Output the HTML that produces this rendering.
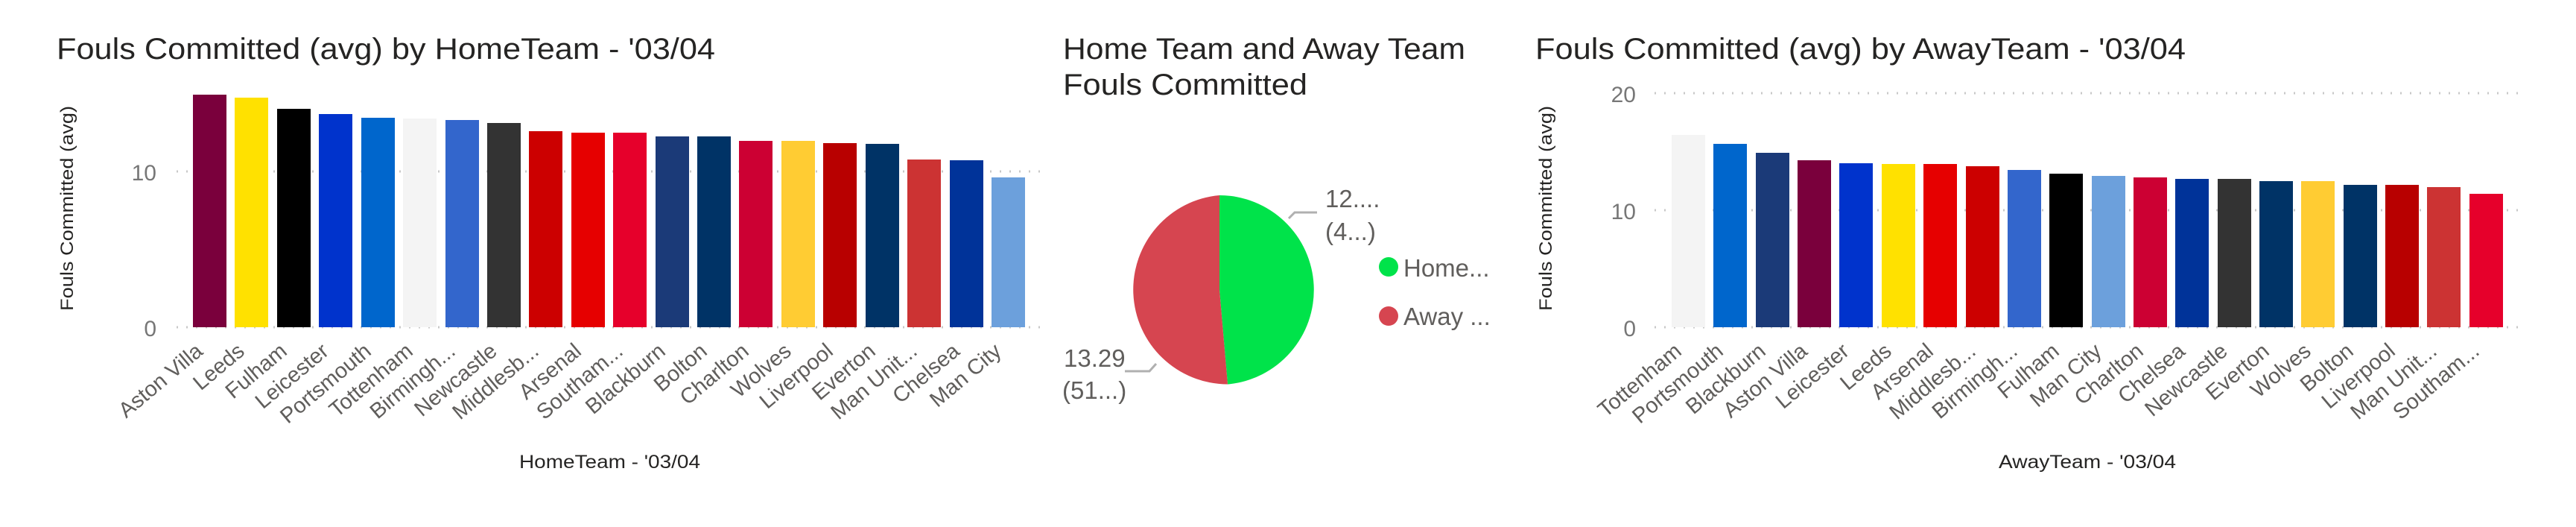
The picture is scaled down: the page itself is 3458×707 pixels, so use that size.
<!DOCTYPE html>
<html><head><meta charset="utf-8"><style>
html,body{margin:0;padding:0;background:#fff;}
svg{display:block;}
text{font-family:"Liberation Sans",sans-serif;}
</style></head><body>
<svg width="3458" height="707" viewBox="0 0 3458 707" xmlns="http://www.w3.org/2000/svg">
<!-- LEFT CHART -->
<text x="76" y="79" font-size="40" fill="#252423" textLength="884" lengthAdjust="spacingAndGlyphs">Fouls Committed (avg) by HomeTeam - '03/04</text>
<text transform="translate(98,417) rotate(-90)" font-size="24" fill="#252423" textLength="275" lengthAdjust="spacingAndGlyphs">Fouls Committed (avg)</text>
<line x1="237" y1="230" x2="1397" y2="230" stroke="#c8c8c8" stroke-width="3" stroke-dasharray="2,11"/>
<line x1="237" y1="439" x2="1397" y2="439" stroke="#c8c8c8" stroke-width="3" stroke-dasharray="2,11"/>
<text x="210" y="242" font-size="30" fill="#777" text-anchor="end">10</text>
<text x="210" y="451" font-size="30" fill="#777" text-anchor="end">0</text>
<g>
<rect x="259" y="127" width="45" height="312" fill="#7a003c"/>
<rect x="315" y="131" width="45" height="308" fill="#ffe100"/>
<rect x="372" y="146" width="45" height="293" fill="#000000"/>
<rect x="428" y="153" width="45" height="286" fill="#0033cc"/>
<rect x="485" y="158" width="45" height="281" fill="#0066cc"/>
<rect x="541" y="159" width="45" height="280" fill="#f4f4f4"/>
<rect x="598" y="161" width="45" height="278" fill="#3366cc"/>
<rect x="654" y="165" width="45" height="274" fill="#333333"/>
<rect x="710" y="176" width="45" height="263" fill="#cc0000"/>
<rect x="767" y="178" width="45" height="261" fill="#e60000"/>
<rect x="823" y="178" width="45" height="261" fill="#e6002b"/>
<rect x="880" y="183" width="45" height="256" fill="#1b3a78"/>
<rect x="936" y="183" width="45" height="256" fill="#003366"/>
<rect x="992" y="189" width="45" height="250" fill="#cc0033"/>
<rect x="1049" y="189" width="45" height="250" fill="#ffcc33"/>
<rect x="1105" y="192" width="45" height="247" fill="#b80000"/>
<rect x="1162" y="193" width="45" height="246" fill="#003366"/>
<rect x="1218" y="214" width="45" height="225" fill="#cc3333"/>
<rect x="1275" y="215" width="45" height="224" fill="#003399"/>
<rect x="1331" y="238" width="45" height="201" fill="#6ca0dc"/>
</g>
<g font-size="29" fill="#605e5c" text-anchor="end">
<text transform="translate(274,474) rotate(-40)">Aston Villa</text>
<text transform="translate(330,474) rotate(-40)">Leeds</text>
<text transform="translate(387,474) rotate(-40)">Fulham</text>
<text transform="translate(443,474) rotate(-40)">Leicester</text>
<text transform="translate(500,474) rotate(-40)">Portsmouth</text>
<text transform="translate(556,474) rotate(-40)">Tottenham</text>
<text transform="translate(613,474) rotate(-40)">Birmingh...</text>
<text transform="translate(669,474) rotate(-40)">Newcastle</text>
<text transform="translate(725,474) rotate(-40)">Middlesb...</text>
<text transform="translate(782,474) rotate(-40)">Arsenal</text>
<text transform="translate(838,474) rotate(-40)">Southam...</text>
<text transform="translate(895,474) rotate(-40)">Blackburn</text>
<text transform="translate(951,474) rotate(-40)">Bolton</text>
<text transform="translate(1007,474) rotate(-40)">Charlton</text>
<text transform="translate(1064,474) rotate(-40)">Wolves</text>
<text transform="translate(1120,474) rotate(-40)">Liverpool</text>
<text transform="translate(1177,474) rotate(-40)">Everton</text>
<text transform="translate(1233,474) rotate(-40)">Man Unit...</text>
<text transform="translate(1290,474) rotate(-40)">Chelsea</text>
<text transform="translate(1346,474) rotate(-40)">Man City</text>
</g>
<text x="697" y="628" font-size="25" fill="#252423" textLength="243" lengthAdjust="spacingAndGlyphs">HomeTeam - '03/04</text>

<!-- PIE -->
<text x="1427" y="79" font-size="40" fill="#252423" textLength="540" lengthAdjust="spacingAndGlyphs">Home Team and Away Team</text>
<text x="1427" y="127" font-size="40" fill="#252423" textLength="328" lengthAdjust="spacingAndGlyphs">Fouls Committed</text>
<path d="M1637,389 L1637,262 A127,127 0 0 1 1648,515.5 Z" fill="#00e34a"/>
<path d="M1637,389 L1648,515.5 A127,127 0 0 1 1637,262 Z" fill="#d64550"/>
<polyline points="1730,293 1738,285 1768,285" fill="none" stroke="#b0b0b0" stroke-width="3"/>
<polyline points="1510,498 1543,498 1552,488" fill="none" stroke="#b0b0b0" stroke-width="3"/>
<g font-size="33" fill="#605e5c">
<text x="1779" y="278">12....</text>
<text x="1779" y="322">(4...)</text>
<text x="1428" y="492">13.29</text>
<text x="1426" y="535">(51...)</text>
<text x="1884" y="371">Home...</text>
<text x="1884" y="436">Away ...</text>
</g>
<circle cx="1864" cy="358" r="13" fill="#00e34a"/>
<circle cx="1864" cy="424" r="13" fill="#d64550"/>

<!-- RIGHT CHART -->
<text x="2061" y="79" font-size="40" fill="#252423" textLength="873" lengthAdjust="spacingAndGlyphs">Fouls Committed (avg) by AwayTeam - '03/04</text>
<text transform="translate(2083,417) rotate(-90)" font-size="24" fill="#252423" textLength="275" lengthAdjust="spacingAndGlyphs">Fouls Committed (avg)</text>
<line x1="2221" y1="125" x2="3380" y2="125" stroke="#c8c8c8" stroke-width="3" stroke-dasharray="2,11"/>
<line x1="2221" y1="282" x2="3380" y2="282" stroke="#c8c8c8" stroke-width="3" stroke-dasharray="2,11"/>
<line x1="2221" y1="439" x2="3380" y2="439" stroke="#c8c8c8" stroke-width="3" stroke-dasharray="2,11"/>
<text x="2196" y="137" font-size="30" fill="#777" text-anchor="end">20</text>
<text x="2196" y="294" font-size="30" fill="#777" text-anchor="end">10</text>
<text x="2196" y="451" font-size="30" fill="#777" text-anchor="end">0</text>
<g>
<rect x="2244" y="181" width="45" height="258" fill="#f4f4f4"/>
<rect x="2300" y="193" width="45" height="246" fill="#0066cc"/>
<rect x="2357" y="205" width="45" height="234" fill="#1b3a78"/>
<rect x="2413" y="215" width="45" height="224" fill="#7a003c"/>
<rect x="2469" y="219" width="45" height="220" fill="#0033cc"/>
<rect x="2526" y="220" width="45" height="219" fill="#ffe100"/>
<rect x="2582" y="220" width="45" height="219" fill="#e60000"/>
<rect x="2639" y="223" width="45" height="216" fill="#cc0000"/>
<rect x="2695" y="228" width="45" height="211" fill="#3366cc"/>
<rect x="2751" y="233" width="45" height="206" fill="#000000"/>
<rect x="2808" y="236" width="45" height="203" fill="#6ca0dc"/>
<rect x="2864" y="238" width="45" height="201" fill="#cc0033"/>
<rect x="2920" y="240" width="45" height="199" fill="#003399"/>
<rect x="2977" y="240" width="45" height="199" fill="#333333"/>
<rect x="3033" y="243" width="45" height="196" fill="#003366"/>
<rect x="3089" y="243" width="45" height="196" fill="#ffcc33"/>
<rect x="3146" y="248" width="45" height="191" fill="#003366"/>
<rect x="3202" y="248" width="45" height="191" fill="#b80000"/>
<rect x="3258" y="251" width="45" height="188" fill="#cc3333"/>
<rect x="3315" y="260" width="45" height="179" fill="#e6002b"/>
</g>
<g font-size="29" fill="#605e5c" text-anchor="end">
<text transform="translate(2259,474) rotate(-40)">Tottenham</text>
<text transform="translate(2315,474) rotate(-40)">Portsmouth</text>
<text transform="translate(2372,474) rotate(-40)">Blackburn</text>
<text transform="translate(2428,474) rotate(-40)">Aston Villa</text>
<text transform="translate(2484,474) rotate(-40)">Leicester</text>
<text transform="translate(2541,474) rotate(-40)">Leeds</text>
<text transform="translate(2597,474) rotate(-40)">Arsenal</text>
<text transform="translate(2654,474) rotate(-40)">Middlesb...</text>
<text transform="translate(2710,474) rotate(-40)">Birmingh...</text>
<text transform="translate(2766,474) rotate(-40)">Fulham</text>
<text transform="translate(2823,474) rotate(-40)">Man City</text>
<text transform="translate(2879,474) rotate(-40)">Charlton</text>
<text transform="translate(2935,474) rotate(-40)">Chelsea</text>
<text transform="translate(2992,474) rotate(-40)">Newcastle</text>
<text transform="translate(3048,474) rotate(-40)">Everton</text>
<text transform="translate(3104,474) rotate(-40)">Wolves</text>
<text transform="translate(3161,474) rotate(-40)">Bolton</text>
<text transform="translate(3217,474) rotate(-40)">Liverpool</text>
<text transform="translate(3273,474) rotate(-40)">Man Unit...</text>
<text transform="translate(3330,474) rotate(-40)">Southam...</text>
</g>
<text x="2683" y="628" font-size="25" fill="#252423" textLength="238" lengthAdjust="spacingAndGlyphs">AwayTeam - '03/04</text>
</svg>
</body></html>
